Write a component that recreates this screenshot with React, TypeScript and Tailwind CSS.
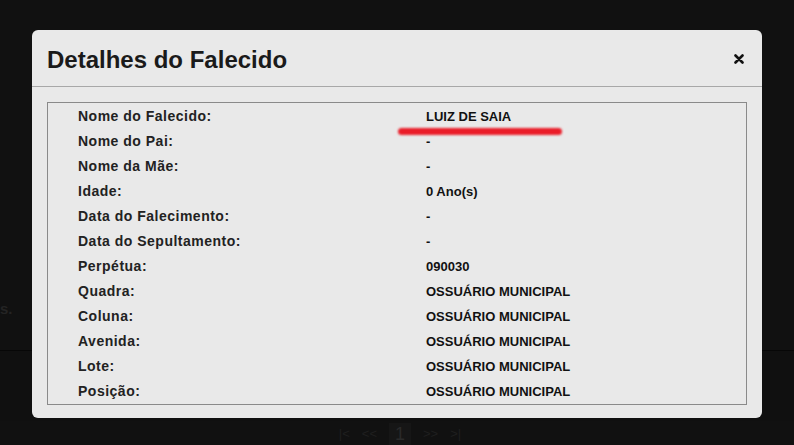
import React from 'react';

const rows: [string, string][] = [
  ['Nome do Falecido:', 'LUIZ DE SAIA'],
  ['Nome do Pai:', '-'],
  ['Nome da Mãe:', '-'],
  ['Idade:', '0 Ano(s)'],
  ['Data do Falecimento:', '-'],
  ['Data do Sepultamento:', '-'],
  ['Perpétua:', '090030'],
  ['Quadra:', 'OSSUÁRIO MUNICIPAL'],
  ['Coluna:', 'OSSUÁRIO MUNICIPAL'],
  ['Avenida:', 'OSSUÁRIO MUNICIPAL'],
  ['Lote:', 'OSSUÁRIO MUNICIPAL'],
  ['Posição:', 'OSSUÁRIO MUNICIPAL'],
];

const App: React.FC = () => {
  return (
    <div
      className="relative w-[794px] h-[445px] overflow-hidden bg-[#111111]"
      style={{ fontFamily: '"Liberation Sans", Arial, sans-serif' }}
    >
      {/* Página ao fundo, escurecida */}
      <div className="flex flex-col h-full">
        <div className="h-[298px]" />
        <div className="h-[52px] text-[15px] font-bold text-[#242424] leading-[22px]">s.</div>
        <div className="h-px bg-[#070707]" />
        <div className="flex-1 bg-[#101010]" />
        <div className="flex justify-center items-end gap-3 h-[24px] pl-[6px] text-[13px] text-[#1f1f1f]">
          <span className="pb-[2px]">|&lt;</span>
          <span className="pb-[2px]">&lt;&lt;</span>
          <span className="px-[6px] bg-[#161616] text-[18px] text-[#2a2a2a] leading-[22px]">1</span>
          <span className="pb-[2px]">&gt;&gt;</span>
          <span className="pb-[2px]">&gt;|</span>
        </div>
      </div>

      {/* Modal */}
      <div className="absolute left-[32px] top-[30px] w-[730px] h-[388px] rounded-[6px] bg-[#e9e9e9]">
        <div className="flex items-center justify-between h-[57px] px-[15px] border-b border-[#a8a8a8]">
          <h3 className="text-[24px] font-bold text-[#1a1a1a] pt-[3px]">Detalhes do Falecido</h3>
          <button className="mr-[3px] mt-[2px]">
            <svg width="10" height="10" viewBox="0 0 10 10">
              <path d="M1.5 1.5 L8.5 8.5 M8.5 1.5 L1.5 8.5" stroke="#111" strokeWidth="2.6" strokeLinecap="round" />
            </svg>
          </button>
        </div>
        <div className="px-[15px] pt-[15px]">
          <div className="relative border border-[#8a8a8a] pt-[1px]">
            {rows.map(([label, value]) => (
              <div key={label} className="flex items-center h-[25px]">
                <div className="w-[378px] pl-[30px] text-[14px] font-bold tracking-[0.5px] text-[#222]">{label}</div>
                <div className="text-[13px] font-bold text-[#111]">{value}</div>
              </div>
            ))}
            <div className="absolute left-[350px] top-[25px] w-[164px] h-[7px] rounded-full bg-[#ea1c28] blur-[0.8px]" />
          </div>
        </div>
      </div>
    </div>
  );
};

export default App;
